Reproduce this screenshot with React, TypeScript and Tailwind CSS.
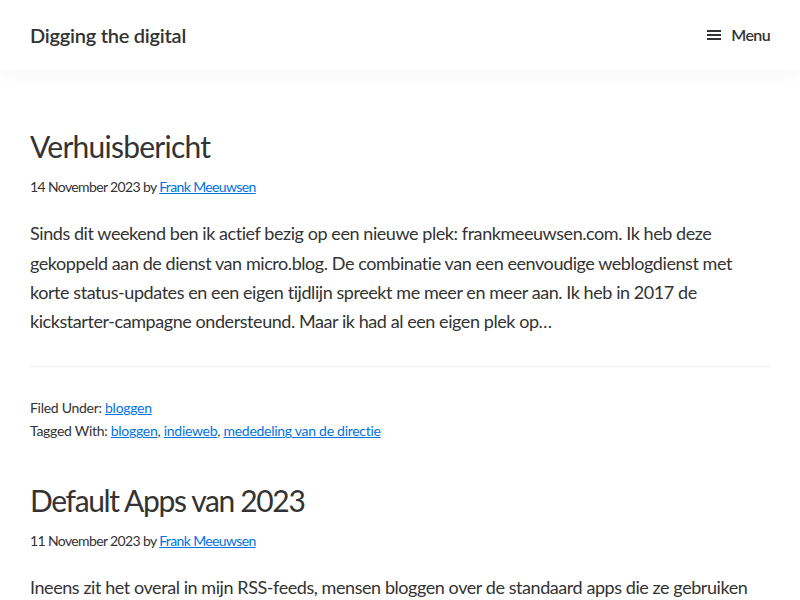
export default function App() {
  const font = { fontFamily: "Lato, 'Liberation Sans', sans-serif" };
  return (
    <div className="min-h-screen bg-white text-[#333]" style={font}>
      <header className="flex h-[70px] items-center justify-between bg-white px-[30px] shadow-[0_0_20px_rgba(0,0,0,0.05)]">
        <div className="text-[20px] font-semibold tracking-[-0.012em] text-[#333]">Digging the digital</div>
        <button className="flex items-center gap-[9px] text-[16px] font-semibold tracking-[-0.04em] text-[#333]">
          <svg width="16" height="16" viewBox="0 0 16 16" fill="#333">
            <rect x="1" y="3" width="14" height="2" />
            <rect x="1" y="7" width="14" height="2" />
            <rect x="1" y="11" width="14" height="2" />
          </svg>
          Menu
        </button>
      </header>
      <main className="px-[30px] pt-[58px]">
        <article>
          <h2 className="text-[30px] leading-[1.2] font-normal tracking-[-0.025em]">Verhuisbericht</h2>
          <p className="mt-[12px] text-[14px] leading-[1.6] tracking-[-0.045em]">
            14 November 2023 by <a href="#" className="text-[#0073e5] underline">Frank Meeuwsen</a>
          </p>
          <p className="mt-[21px] text-[18px] leading-[1.625] tracking-[-0.024em]">
            Sinds dit weekend ben ik actief bezig op een nieuwe plek: frankmeeuwsen.com. Ik heb deze gekoppeld aan de dienst van micro.blog. De combinatie van een eenvoudige weblogdienst met korte status-updates en een eigen tijdlijn spreekt me meer en meer aan. Ik heb in 2017 de kickstarter-campagne ondersteund. Maar ik had al een eigen plek op…
          </p>
          <div className="mt-[30px] border-t border-[#eee] pt-[29px] text-[14px] leading-[1.65] tracking-[-0.02em]">
            <p>Filed Under: <a href="#" className="text-[#0073e5] underline">bloggen</a></p>
            <p>
              Tagged With: <a href="#" className="text-[#0073e5] underline">bloggen</a>,{" "}
              <a href="#" className="text-[#0073e5] underline">indieweb</a>,{" "}
              <a href="#" className="text-[#0073e5] underline">mededeling van de directie</a>
            </p>
          </div>
        </article>
        <article className="mt-[39px]">
          <h2 className="text-[30px] leading-[1.2] font-normal tracking-[-0.045em]">Default Apps van 2023</h2>
          <p className="mt-[12px] text-[14px] leading-[1.6] tracking-[-0.045em]">
            11 November 2023 by <a href="#" className="text-[#0073e5] underline">Frank Meeuwsen</a>
          </p>
          <p className="mt-[21px] text-[18px] leading-[1.625] tracking-[-0.024em]">
            Ineens zit het overal in mijn RSS-feeds, mensen bloggen over de standaard apps die ze gebruiken om hun dagelijkse werk te doen.
          </p>
        </article>
      </main>
    </div>
  );
}
